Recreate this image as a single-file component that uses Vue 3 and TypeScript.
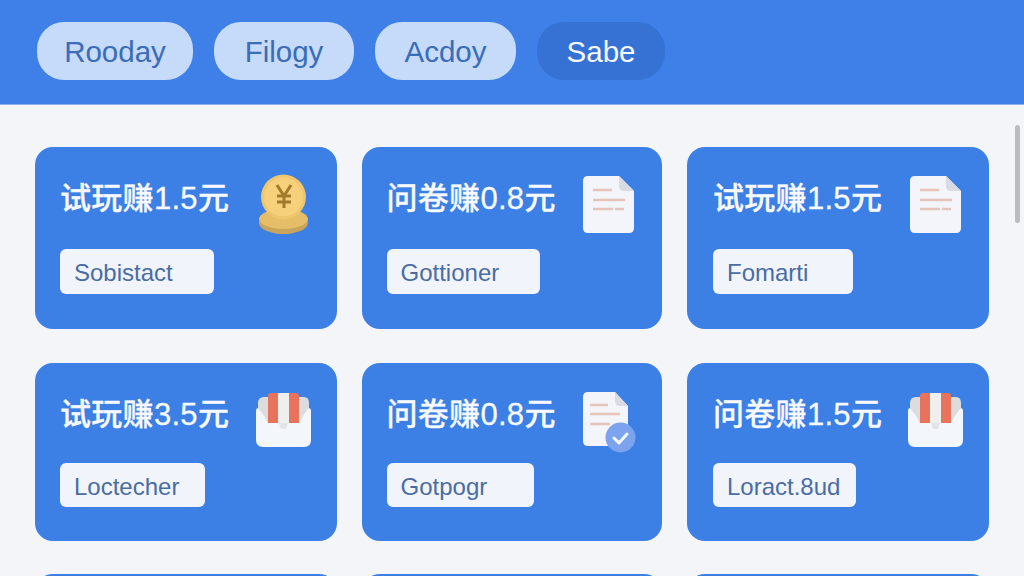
<script setup lang="ts">
interface Task {
  title: string
  tag: string
  tagWidth: number
  icon: 'coin' | 'doc' | 'box' | 'docCheck'
}

const tabs = [
  { label: 'Rooday', width: 156 },
  { label: 'Filogy', width: 140 },
  { label: 'Acdoy', width: 141 },
  { label: 'Sabe', width: 128, active: true },
]

const tasks: Task[] = [
  { title: '试玩赚1.5元', tag: 'Sobistact', tagWidth: 154, icon: 'coin' },
  { title: '问卷赚0.8元', tag: 'Gottioner', tagWidth: 153, icon: 'doc' },
  { title: '试玩赚1.5元', tag: 'Fomarti', tagWidth: 140, icon: 'doc' },
  { title: '试玩赚3.5元', tag: 'Loctecher', tagWidth: 145, icon: 'box' },
  { title: '问卷赚0.8元', tag: 'Gotpogr', tagWidth: 147, icon: 'docCheck' },
  { title: '问卷赚1.5元', tag: 'Loract.8ud', tagWidth: 143, icon: 'box' },
]
</script>

<template>
  <div class="page">
    <header class="tabs">
      <button
        v-for="tab in tabs"
        :key="tab.label"
        class="tab"
        :class="{ active: tab.active }"
        :style="{ width: tab.width + 'px' }"
      >
        {{ tab.label }}
      </button>
    </header>

    <main class="grid">
      <section v-for="(task, i) in tasks" :key="i" class="card">
        <div class="top">
          <h2 class="title">{{ task.title }}</h2>

          <svg v-if="task.icon === 'coin'" class="icon" viewBox="0 0 56 66">
            <ellipse cx="28.5" cy="52" rx="24.5" ry="11" fill="#c8a45c" />
            <ellipse cx="28.5" cy="48" rx="24.5" ry="10" fill="#e6bd68" />
            <circle cx="28.5" cy="26" r="22.5" fill="#efc66c" />
            <circle cx="28.5" cy="26" r="19.5" fill="#f6d07a" />
            <path
              d="M22 14l7 11 7-11M29 25v12M22 25h14M22 31h14"
              fill="none"
              stroke="#a37a2c"
              stroke-width="3"
            />
          </svg>

          <svg v-else-if="task.icon === 'box'" class="icon" viewBox="0 0 56 66">
            <path d="M3 16q0-6 6-6h40q5 0 5 6v24H3z" fill="#dcdcde" />
            <path d="M13 9q0-3 3-3h7v31h-10z" fill="#e8735c" />
            <path d="M34 6h7q3 0 3 3v28h-10z" fill="#e8735c" />
            <path d="M23 6h11v31h-11z" fill="#f1efee" />
            <path
              d="M1 24q0-4 3-2 5 6 9 14h31q4-8 9-14 3-2 3 2v29q0 7-7 7H8q-7 0-7-7z"
              fill="#f3f6fb"
            />
            <path d="M24 36h9l-2 6h-5z" fill="#e2e4e8" />
          </svg>

          <svg v-else-if="task.icon === 'doc'" class="icon" viewBox="0 0 56 66">
            <path
              d="M3 10q0-5 5-5h31l15 15v37q0 5-5 5H8q-5 0-5-5z"
              fill="#f3f5fa"
            />
            <path d="M39 5l15 15H44q-5 0-5-5z" fill="#d9dbe2" />
            <path
              d="M13 19h19M13 29h32M13 38h20M35 38h9"
              fill="none"
              stroke="#e6c4b8"
              stroke-width="2.6"
            />
          </svg>

          <svg v-else class="icon" viewBox="0 0 56 66">
            <path
              d="M3 10q0-5 5-5h27l13 14v35q0 5-5 5H8q-5 0-5-5z"
              fill="#f3f5fa"
            />
            <path d="M35 5l13 14H40q-5 0-5-5z" fill="#d9dbe2" />
            <path
              d="M10 18h18M10 27h30M10 37h20"
              fill="none"
              stroke="#e6c4b8"
              stroke-width="2.6"
            />
            <circle cx="40.5" cy="50.5" r="15" fill="#7ba3ee" />
            <path
              d="M34 51l5 5 8-9"
              fill="none"
              stroke="#f4f7fc"
              stroke-width="3"
              stroke-linecap="round"
              stroke-linejoin="round"
            />
          </svg>
        </div>

        <div class="tag" :style="{ width: task.tagWidth + 'px' }">{{ task.tag }}</div>
      </section>

      <section v-for="n in 3" :key="'next' + n" class="card"></section>
    </main>

    <div class="scrollbar"></div>
  </div>
</template>

<style scoped>
.page {
  position: relative;
  height: 576px;
  overflow: hidden;
  background: #f3f5f9;
  font-family: "Liberation Sans", "Noto Sans CJK SC", sans-serif;
}

.tabs {
  display: flex;
  gap: 21px;
  height: 105px;
  box-sizing: border-box;
  padding: 22px 37px 0;
  background: #3f80e8;
  border-bottom: 1px solid #8fb2ec;
}

.tab {
  height: 58px;
  padding: 2px 0 0;
  border: none;
  border-radius: 27px;
  background: #c6daf9;
  color: #3a6cb8;
  font-family: inherit;
  font-size: 29.5px;
}

.tab.active {
  background: #3672d4;
  color: #f5f8fe;
}

.grid {
  display: grid;
  grid-template-columns: 301.5px 300.5px 302px;
  grid-template-rows: 182px 178px 178px;
  column-gap: 25px;
  row-gap: 33.5px;
  padding: 42px 0 0 35px;
}

.card {
  display: flex;
  flex-direction: column;
  align-items: flex-start;
  box-sizing: border-box;
  padding: 25px 26px 0 25px;
  border-radius: 18px;
  background: #3c7fe5;
}

.card:nth-child(3n) {
  padding-left: 26px;
}

.top {
  display: flex;
  justify-content: space-between;
  align-self: stretch;
  height: 77px;
}

.card:nth-child(n + 4) .top {
  height: 75.5px;
}

.card:nth-child(n + 4) .tag {
  height: 44px;
}

.title {
  margin: 7px 0 0;
  color: #f7f9fe;
  font-size: 31px;
  font-weight: 500;
  line-height: 40px;
  letter-spacing: 0.3px;
  -webkit-text-stroke: 0.3px #f7f9fe;
}

.icon {
  width: 56px;
  height: 66px;
  margin-top: -1px;
  flex: none;
  overflow: visible;
}

.tag {
  box-sizing: border-box;
  height: 45px;
  padding-left: 14px;
  border-radius: 6px;
  background: #f1f5fb;
  color: #4a6ca3;
  font-size: 24px;
  line-height: 47px;
  white-space: nowrap;
}

.scrollbar {
  position: absolute;
  top: 125px;
  left: 1015px;
  width: 5px;
  height: 98px;
  border-radius: 3px;
  background: #b9bcc2;
}
</style>

<style>
html,
body {
  margin: 0;
  overflow: hidden;
}
</style>
